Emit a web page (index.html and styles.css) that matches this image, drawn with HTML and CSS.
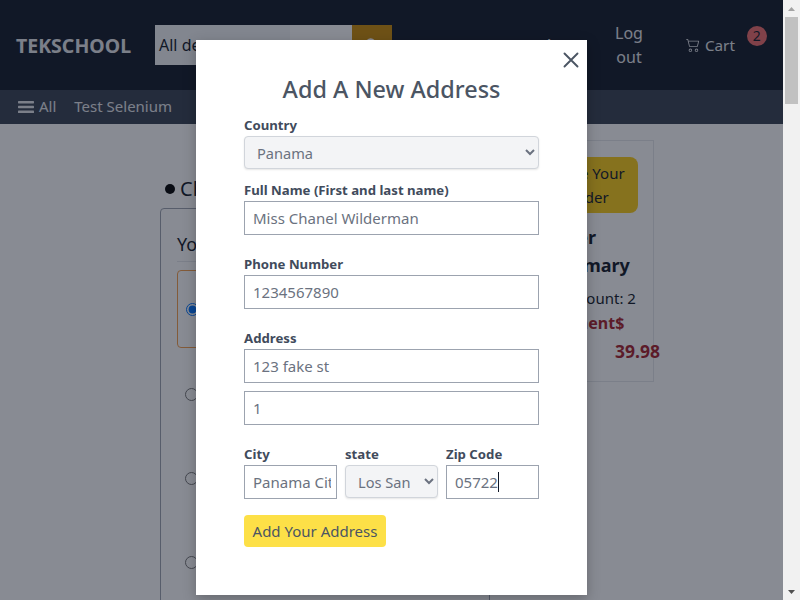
FILE: index.html
```html
<!DOCTYPE html>
<html lang="en">
<head>
<meta charset="utf-8">
<title>Checkout</title>
<link rel="stylesheet" href="styles.css">
</head>
<body>
<div class="page">
  <header class="topbar">
    <div class="logo">TEKSCHOOL</div>
    <div class="search">
      <div class="search-cat">All departments</div>
      <div class="search-input"></div>
      <div class="search-btn"><svg class="search-icon" viewBox="0 0 16 16" fill="none" stroke="currentColor" stroke-width="2.2" stroke-linecap="round"><circle cx="6.5" cy="6.5" r="5"/><path d="M10.5 10.5L15 15"/></svg></div>
    </div>
    <div class="account">Acct</div>
    <div class="logout">Log out</div>
    <div class="cart">
      <svg class="cart-icon" viewBox="0 0 16 16" fill="currentColor"><path d="M0 1.5A.5.5 0 0 1 .5 1H2a.5.5 0 0 1 .49.4L2.89 3H14.5a.5.5 0 0 1 .49.59l-1.5 6A.5.5 0 0 1 13 10H4a.5.5 0 0 1-.49-.4L1.61 2H.5a.5.5 0 0 1-.5-.5zM3.1 4l1.25 5h8.26l1.25-5H3.1zM5 12a2 2 0 1 0 0 4 2 2 0 0 0 0-4zm7 0a2 2 0 1 0 0 4 2 2 0 0 0 0-4zm-7 1a1 1 0 1 1 0 2 1 1 0 0 1 0-2zm7 0a1 1 0 1 1 0 2 1 1 0 0 1 0-2z"/></svg>
      <span class="cart-label">Cart</span>
      <span class="badge">2</span>
    </div>
  </header>
  <nav class="subbar">
    <svg class="menu-icon" viewBox="0 0 16 14" fill="currentColor"><rect y="1" width="16" height="2.4" rx=".6"/><rect y="5.8" width="16" height="2.4" rx=".6"/><rect y="10.6" width="16" height="2.4" rx=".6"/></svg>
    <span class="sub-all">All</span>
    <span>Test Selenium</span>
  </nav>
  <main class="checkout">
    <section class="left">
      <h2 class="left-title"><span class="dot"></span>Checkout</h2>
      <div class="panel">
        <h3 class="panel-title">Your addresses</h3>
        <div class="addr addr-active"><input type="radio" name="a" checked></div>
        <div class="addr"><input type="radio" name="a"></div>
        <div class="addr"><input type="radio" name="a"></div>
        <div class="addr"><input type="radio" name="a"></div>
      </div>
    </section>
    <aside class="summary">
      <button class="place" type="button">Place Your Order</button>
      <h3 class="sum-title">Order Summary</h3>
      <p class="sum-count">Item Count: 2</p>
      <p class="sum-pay">Payment$</p>
      <p class="sum-total">39.98</p>
    </aside>
  </main>
  <div class="overlay"></div>
  <form class="modal">
    <svg class="close" viewBox="0 0 16 16" fill="none" stroke="currentColor" stroke-width="1.9" stroke-linecap="round"><path d="M1.5 1.5l13 13M14.5 1.5l-13 13"/></svg>
    <h2 class="modal-title">Add A New Address</h2>
    <label class="lab lab-first">Country</label>
    <select class="sel sel-full"><option>Panama</option></select>
    <label class="lab lab-name">Full Name (First and last name)</label>
    <input class="inp" value="Miss Chanel Wilderman">
    <label class="lab lab-gap">Phone Number</label>
    <input class="inp" value="1234567890">
    <label class="lab lab-gap">Address</label>
    <input class="inp" value="123 fake st">
    <input class="inp inp-second" value="1">
    <div class="row">
      <div class="col"><label class="lab">City</label><input class="inp" value="Panama City"></div>
      <div class="col"><label class="lab">state</label><select class="sel sel-state"><option>Los Santos</option></select></div>
      <div class="col"><label class="lab">Zip Code</label><div class="inp zip">05722<span class="caret"></span></div></div>
    </div>
    <button class="add" type="button">Add Your Address</button>
  </form>
</div>
<div class="scrollbar">
  <div class="sb-btn"><svg class="sb-arrow" viewBox="0 0 7 4"><path d="M3.5 0L7 4H0z" fill="#a3a3a3"/></svg></div>
  <div class="sb-track"><div class="sb-thumb"></div></div>
  <div class="sb-btn"><svg class="sb-arrow" viewBox="0 0 7 4"><path d="M0 0H7L3.5 4z" fill="#505050"/></svg></div>
</div>
</body>
</html>
```
FILE: styles.css
```css
* { box-sizing: border-box; }
html { overflow: hidden; }
body { margin: 0; height: 100vh; display: flex; overflow: hidden; font-family: "Noto Sans", "Open Sans", sans-serif; color: #111827; background: #fff; }
.page { position: relative; flex: 1; min-width: 0; height: 100%; overflow: hidden; }
.scrollbar { flex: none; width: 17px; height: 100%; display: flex; flex-direction: column; background: #f1f1f1; }
.sb-btn { flex: none; height: 17px; display: flex; align-items: center; justify-content: center; }
.sb-arrow { display: block; width: 7px; height: 4px; }
.sb-track { flex: 1; padding: 0 2px; }
.sb-thumb { height: 87px; background: #c1c1c1; }
.topbar { height: 90px; background: #111827; color: #e5e7eb; display: flex; align-items: center; padding-left: 16px; font-size: 16px; }
.logo { font-weight: 700; font-size: 19.5px; width: 139px; }
.search { display: flex; height: 40px; width: 237px; flex: none; }
.search-cat { width: 135px; background: #f3f4f6; color: #111827; padding: 8px 4px; line-height: 24px; white-space: nowrap; overflow: hidden; }
.search-input { width: 62px; background: #fff; }
.search-btn { width: 40px; background: #ca8a04; display: flex; align-items: center; justify-content: center; color: #fff; }
.search-icon { width: 14px; height: 14px; }
.account { margin-left: 152px; width: 40px; margin-right: 30px; }
.logout { width: 30px; text-align: center; line-height: 24px; margin-right: 42px; }
.cart { display: flex; align-items: center; position: relative; }
.cart-icon { width: 14px; height: 14px; margin-right: 5px; }
.cart-label { font-size: 15.2px; }
.badge { position: absolute; top: -9px; right: -32px; width: 20px; height: 20px; border-radius: 50%; background: #ef6b6b; color: #111827; font-size: 14px; line-height: 20px; text-align: center; }
.subbar { height: 34px; background: #374151; color: #e5e7eb; display: flex; align-items: center; padding: 0 0 2px 18px; font-size: 15px; }
.menu-icon { width: 16px; height: 14px; margin: 2px 5px 0 0; }
.sub-all { margin-right: 18px; }
.checkout { display: flex; padding-top: 16px; padding-left: 160px; align-items: flex-start; }
.left { width: 330px; flex: none; }
.left-title { margin: 32px 0 0; height: 36px; font-size: 20px; font-weight: 400; line-height: 30px; padding: 0 0 2px 5px; display: flex; align-items: center; }
.dot { width: 10px; height: 10px; border-radius: 50%; background: #000; margin-right: 5px; }
.panel { border: 1px solid #9ca3af; border-radius: 4px; padding: 0 16px; height: 800px; }
.panel-title { margin: 21px 0 0; padding-bottom: 3px; border-bottom: 1px solid #e5e7eb; font-size: 18px; font-weight: 400; line-height: 28px; }
.addr { height: 84px; padding-left: 8px; display: flex; align-items: center; }
.addr input { margin: 0; width: 13px; height: 13px; }
.addr-active { height: 78px; margin-top: 8px; border: 1px solid #f59e4b; border-radius: 4px; }
.addr-active + .addr { margin-top: 4px; }
.summary { margin-left: 14px; width: 150px; flex: none; height: 242px; border: 1px solid #e5e7eb; padding: 16px 16px 0 39px; }
.place { display: block; width: 100px; height: 56px; margin-left: -6px; padding: 0 8px; border: 0; border-radius: 8px; background: #facc15; font: inherit; font-size: 15px; line-height: 24px; color: #111827; }
.sum-title { margin: 10px 0 0; font-size: 18px; line-height: 28px; font-weight: 700; }
.sum-count { margin: 7px 0 0 -4px; font-size: 15px; line-height: 24px; white-space: nowrap; }
.sum-pay { margin: 1px 0 0; font-size: 16px; line-height: 24px; font-weight: 700; color: #a61e2b; }
.sum-total { margin: 4px 0 0 71px; font-size: 17.5px; line-height: 24px; font-weight: 700; color: #a61e2b; white-space: nowrap; }
.overlay { position: absolute; inset: 0; background: rgba(17, 24, 39, .5); }
.modal { position: absolute; left: 196px; top: 40px; width: 391px; height: 555px; background: #fff; padding: 31px 48px 0; color: #4b5563; box-shadow: 0 4px 12px rgba(0,0,0,.25); }
.close { position: absolute; top: 12px; right: 8px; width: 16px; height: 16px; color: #4b5563; }
.modal-title { margin: 0; text-align: center; font-size: 23.4px; line-height: 36px; font-weight: 500; color: #4b5563; }
.lab { display: block; font-size: 13.2px; line-height: 18px; font-weight: 700; color: #414b5c; }
.lab-first { margin-top: 9px; }
.lab-name { margin-top: 12px; }
.lab-gap { margin-top: 20px; }
.inp { display: block; width: 100%; height: 34px; margin-top: 2px; padding: 0 5px 0 8px; border: 1px solid #9ca3af; border-radius: 0; background: #fff; color: #6b7280; font: inherit; font-size: 15px; line-height: 32px; outline: 0; }
.inp-second { margin-top: 8px; }
.sel { display: block; width: 100%; height: 33px; margin-top: 2px; padding: 0 8px; border: 1px solid #d1d5db; border-radius: 4px; background: #f3f4f6; color: #6b7280; font: inherit; font-size: 14.6px; box-shadow: 0 1px 2px rgba(0,0,0,.1); }
.sel-state { padding-right: 11px; }
.row { display: flex; gap: 8px; margin-top: 20px; }
.col { width: 93px; flex: none; }
.zip { display: flex; align-items: center; }
.caret { width: 1px; height: 20px; background: #111827; }
.add { display: block; margin-top: 16px; width: 142px; height: 32px; border: 0; border-radius: 4px; background: #fde047; color: #4b5563; font: inherit; font-size: 15px; padding: 0; }
```
